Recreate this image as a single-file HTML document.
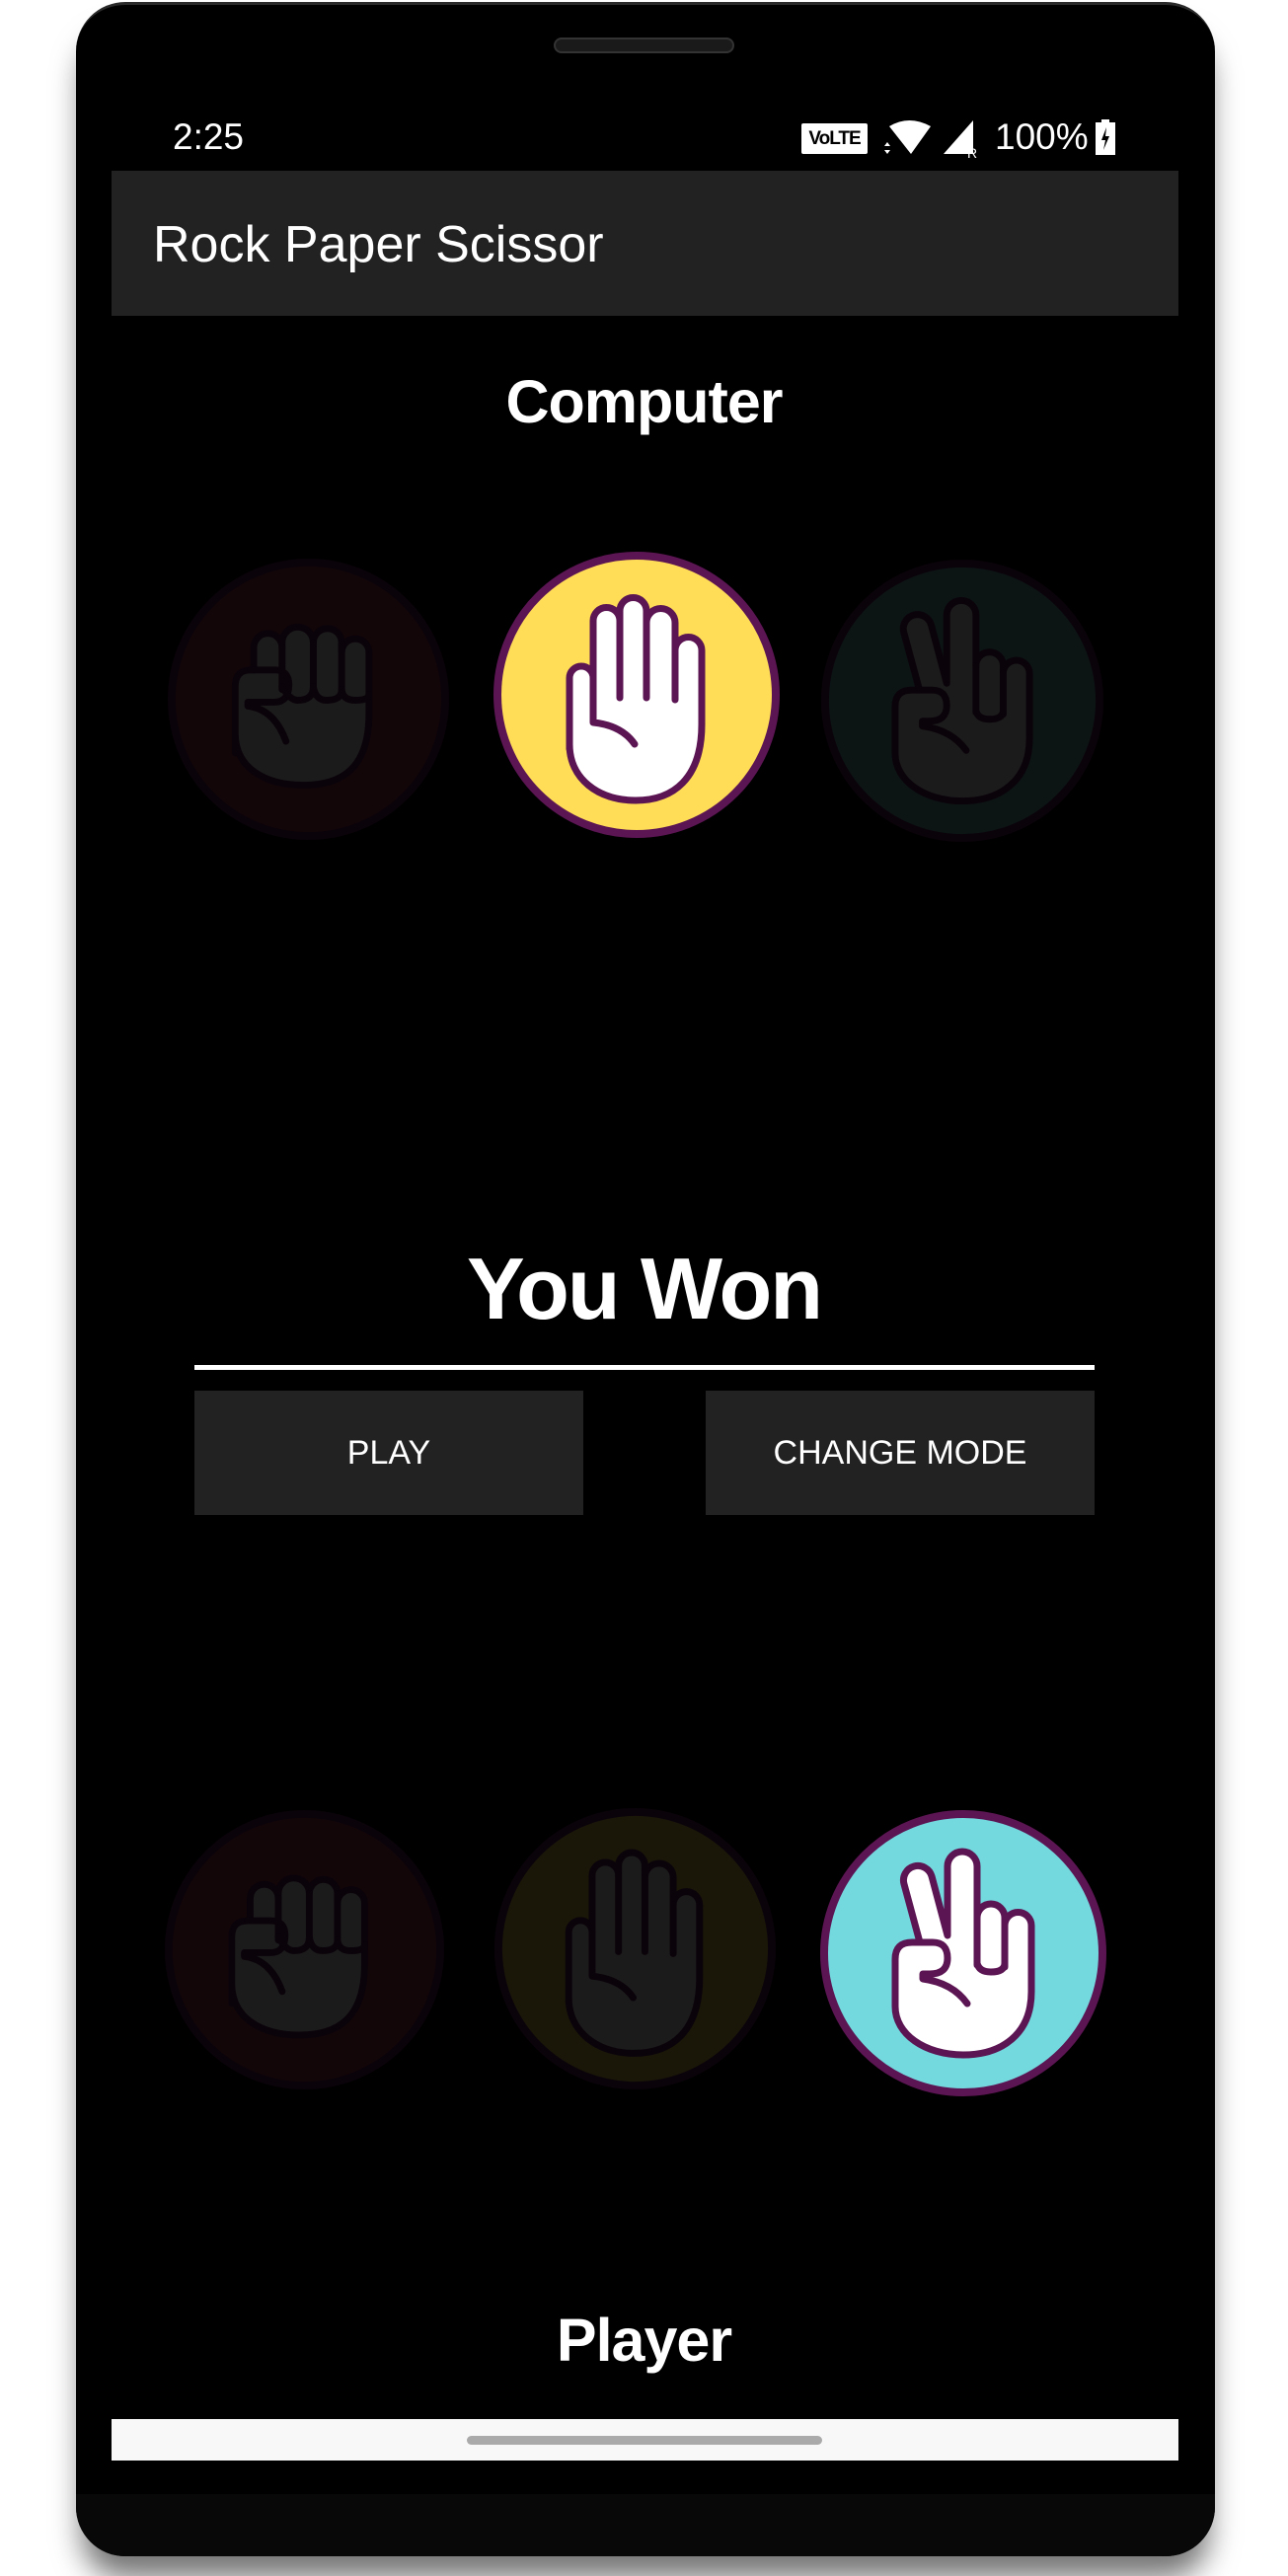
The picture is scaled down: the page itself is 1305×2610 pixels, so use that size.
<!DOCTYPE html>
<html><head><meta charset="utf-8">
<style>
*{margin:0;padding:0;box-sizing:border-box}
html,body{width:1305px;height:2610px;background:#fff;overflow:hidden;font-family:"Liberation Sans",Arial,sans-serif}
.phone{position:absolute;left:77px;top:2px;width:1154px;height:2588px;background:#000;border-radius:50px;box-shadow:0 28px 30px -6px rgba(0,0,0,.55);border-top:3px solid #2a2a2a}
.chin{position:absolute;left:77px;top:2527px;width:1154px;height:63px;background:#080808;border-radius:0 0 50px 50px}
.abs{position:absolute}
.speaker{left:561px;top:38px;width:183px;height:16px;border-radius:8px;background:#1a1a1a;border:2px solid #333}
.txt{color:#fff;white-space:nowrap}
.c{position:absolute;display:block}
.btn{position:absolute;background:#222;color:#fff;font-size:34px;font-weight:500;display:flex;align-items:center;justify-content:center;letter-spacing:0}
</style></head><body>
<div class="phone"></div>
<div class="chin"></div>
<div class="abs speaker"></div>

<div class="abs txt" style="left:175px;top:117px;font-size:37px;line-height:44px">2:25</div>
<div class="abs" style="left:812px;top:125px;width:67px;height:31px;background:#fff;border-radius:2px;color:#000;font-size:19px;font-weight:bold;line-height:31px;text-align:center;letter-spacing:-1px">VoLTE</div>
<svg class="abs" style="left:893px;top:120px" width="56" height="40" viewBox="0 0 56 40"><path d="M8 8 Q28 -4 50 8 L30 36 Z" fill="#fff"/><path d="M3 28 l3 -4 l3 4z M3 32 l3 4 l3 -4z" fill="#fff"/></svg>
<svg class="abs" style="left:954px;top:120px" width="38" height="40" viewBox="0 0 38 40"><path d="M32 2 L32 36 L2 36 Z" fill="#fff"/><text x="26" y="40" font-size="14" fill="#fff" font-family="Liberation Sans">R</text></svg>
<div class="abs txt" style="left:1008px;top:117px;font-size:37px;line-height:44px">100%</div>
<svg class="abs" style="left:1110px;top:121px" width="20" height="36" viewBox="0 0 20 36"><rect x="6" y="0" width="8" height="4" fill="#fff"/><rect x="0" y="3" width="20" height="33" fill="#fff"/><path d="M11 8 L6 21 H10 L8 31 L14 17 H10 Z" fill="#000"/></svg>

<div class="abs" style="left:113px;top:173px;width:1081px;height:147px;background:#222"></div>
<div class="abs txt" style="left:155px;top:218px;font-size:52px;line-height:60px">Rock Paper Scissor</div>

<div class="abs txt" style="left:0;width:1305px;text-align:center;top:372px;font-size:61px;font-weight:bold;line-height:70px;letter-spacing:-1px">Computer</div>

<svg class="c" style="left:169px;top:565px" width="287" height="287" viewBox="0 0 290 290">
<circle cx="145" cy="145" r="140" fill="#130609" stroke="#0b030a" stroke-width="8"/>
<g fill="#1b1b1b" stroke="#0b030a" stroke-width="7" stroke-linejoin="round" stroke-linecap="round">
<path d="M70,200 V132 Q70,115 86,115 H89 V92 A14.5,14.5 0 0 1 118,92 V87 A16,16 0 0 1 150,87 A14.5,14.5 0 0 1 179,87 V97 A14,14 0 0 1 207,97 V160 C207,215 180,233 140,233 C100,233 70,215 70,180 Z"/>
<path fill="none" d="M118,92 V135 M150,87 V135 M179,87 V135 M86,115 H110 Q125,115 125,130 Q125,148 110,148 H83 V152 Q110,155 122,188"/>
<path fill="none" d="M118,132 Q126,146 134,146 Q150,146 150,132 Q152,146 164,146 Q179,146 179,135 Q180,146 193,146 Q207,146 207,140"/>
</g></svg>

<svg class="c" style="left:500px;top:559px" width="290" height="290" viewBox="0 0 290 290">
<circle cx="145" cy="145" r="141" fill="#ffdd57" stroke="#5c1553" stroke-width="8"/>
<g fill="#fff" stroke="#5c1553" stroke-width="7" stroke-linejoin="round" stroke-linecap="round">
<path d="M77,200 V128 A12,12 0 0 1 101,128 V70 A13.5,13.5 0 0 1 128,70 V60 A13.5,13.5 0 0 1 155,60 V72 A14.5,14.5 0 0 1 184,72 V100 A13.5,13.5 0 0 1 211,100 V175 C211,230 182,252 144,252 C106,252 77,230 77,195 Z"/>
<path fill="none" d="M101,128 V173 Q130,176 143,195 M128,70 V148 M155,72 V148 M184,100 V150"/>
</g></svg>

<svg class="c" style="left:831px;top:566px" width="288" height="288" viewBox="0 0 292 292">
<circle cx="146" cy="146" r="141" fill="#0c1414" stroke="#0b030a" stroke-width="8"/>
<g fill="#1b1b1b" stroke="#0b030a" stroke-width="7" stroke-linejoin="round" stroke-linecap="round">
<path d="M77,200 V152 Q77,135 94,135 H102 L86,76 A14,14 0 0 1 114,68 L130,128 V58 A15,15 0 0 1 160,58 V110 A14,14 0 0 1 188,110 V118 A13.5,13.5 0 0 1 215,118 V185 C215,228 185,249 146,249 C107,249 77,228 77,200 Z"/>
<path fill="none" d="M102,135 H115 Q130,135 130,151 Q130,167 112,167 H105 V172 Q135,176 150,197 M160,110 V158 M188,118 V160 M160,156 Q162,165 174,165 Q188,165 188,156"/>
</g></svg>

<div class="abs txt" style="left:0;width:1305px;text-align:center;top:1256px;font-size:88px;font-weight:bold;line-height:100px;letter-spacing:-2px">You Won</div>
<div class="abs" style="left:197px;top:1383px;width:912px;height:5px;background:#fff"></div>
<div class="btn" style="left:197px;top:1409px;width:394px;height:126px">PLAY</div>
<div class="btn" style="left:715px;top:1409px;width:394px;height:126px">CHANGE MODE</div>

<svg class="c" style="left:166px;top:1833px" width="285" height="285" viewBox="0 0 290 290">
<circle cx="145" cy="145" r="140" fill="#130609" stroke="#0b030a" stroke-width="8"/>
<g fill="#1b1b1b" stroke="#0b030a" stroke-width="7" stroke-linejoin="round" stroke-linecap="round">
<path d="M70,200 V132 Q70,115 86,115 H89 V92 A14.5,14.5 0 0 1 118,92 V87 A16,16 0 0 1 150,87 A14.5,14.5 0 0 1 179,87 V97 A14,14 0 0 1 207,97 V160 C207,215 180,233 140,233 C100,233 70,215 70,180 Z"/>
<path fill="none" d="M118,92 V135 M150,87 V135 M179,87 V135 M86,115 H110 Q125,115 125,130 Q125,148 110,148 H83 V152 Q110,155 122,188"/>
<path fill="none" d="M118,132 Q126,146 134,146 Q150,146 150,132 Q152,146 164,146 Q179,146 179,135 Q180,146 193,146 Q207,146 207,140"/>
</g></svg>

<svg class="c" style="left:498px;top:1831px" width="291" height="287" viewBox="0 0 290 290">
<circle cx="145" cy="145" r="140" fill="#1a1709" stroke="#0b030a" stroke-width="8"/>
<g fill="#1b1b1b" stroke="#0b030a" stroke-width="7" stroke-linejoin="round" stroke-linecap="round">
<path d="M77,200 V128 A12,12 0 0 1 101,128 V70 A13.5,13.5 0 0 1 128,70 V60 A13.5,13.5 0 0 1 155,60 V72 A14.5,14.5 0 0 1 184,72 V100 A13.5,13.5 0 0 1 211,100 V175 C211,230 182,252 144,252 C106,252 77,230 77,195 Z"/>
<path fill="none" d="M101,128 V173 Q130,176 143,195 M128,70 V148 M155,72 V148 M184,100 V150"/>
</g></svg>

<svg class="c" style="left:830px;top:1833px" width="292" height="292" viewBox="0 0 292 292">
<circle cx="146" cy="146" r="141" fill="#74d9df" stroke="#5c1553" stroke-width="8"/>
<g fill="#fff" stroke="#5c1553" stroke-width="7" stroke-linejoin="round" stroke-linecap="round">
<path d="M77,200 V152 Q77,135 94,135 H102 L86,76 A14,14 0 0 1 114,68 L130,128 V58 A15,15 0 0 1 160,58 V110 A14,14 0 0 1 188,110 V118 A13.5,13.5 0 0 1 215,118 V185 C215,228 185,249 146,249 C107,249 77,228 77,200 Z"/>
<path fill="none" d="M102,135 H115 Q130,135 130,151 Q130,167 112,167 H105 V172 Q135,176 150,197 M160,110 V158 M188,118 V160 M160,156 Q162,165 174,165 Q188,165 188,156"/>
</g></svg>

<div class="abs txt" style="left:0;width:1305px;text-align:center;top:2336px;font-size:61px;font-weight:bold;line-height:70px;letter-spacing:-1px">Player</div>

<div class="abs" style="left:113px;top:2451px;width:1081px;height:42px;background:#f8f8f8"></div>
<div class="abs" style="left:473px;top:2468px;width:360px;height:9px;border-radius:5px;background:#aaa"></div>
</body></html>
